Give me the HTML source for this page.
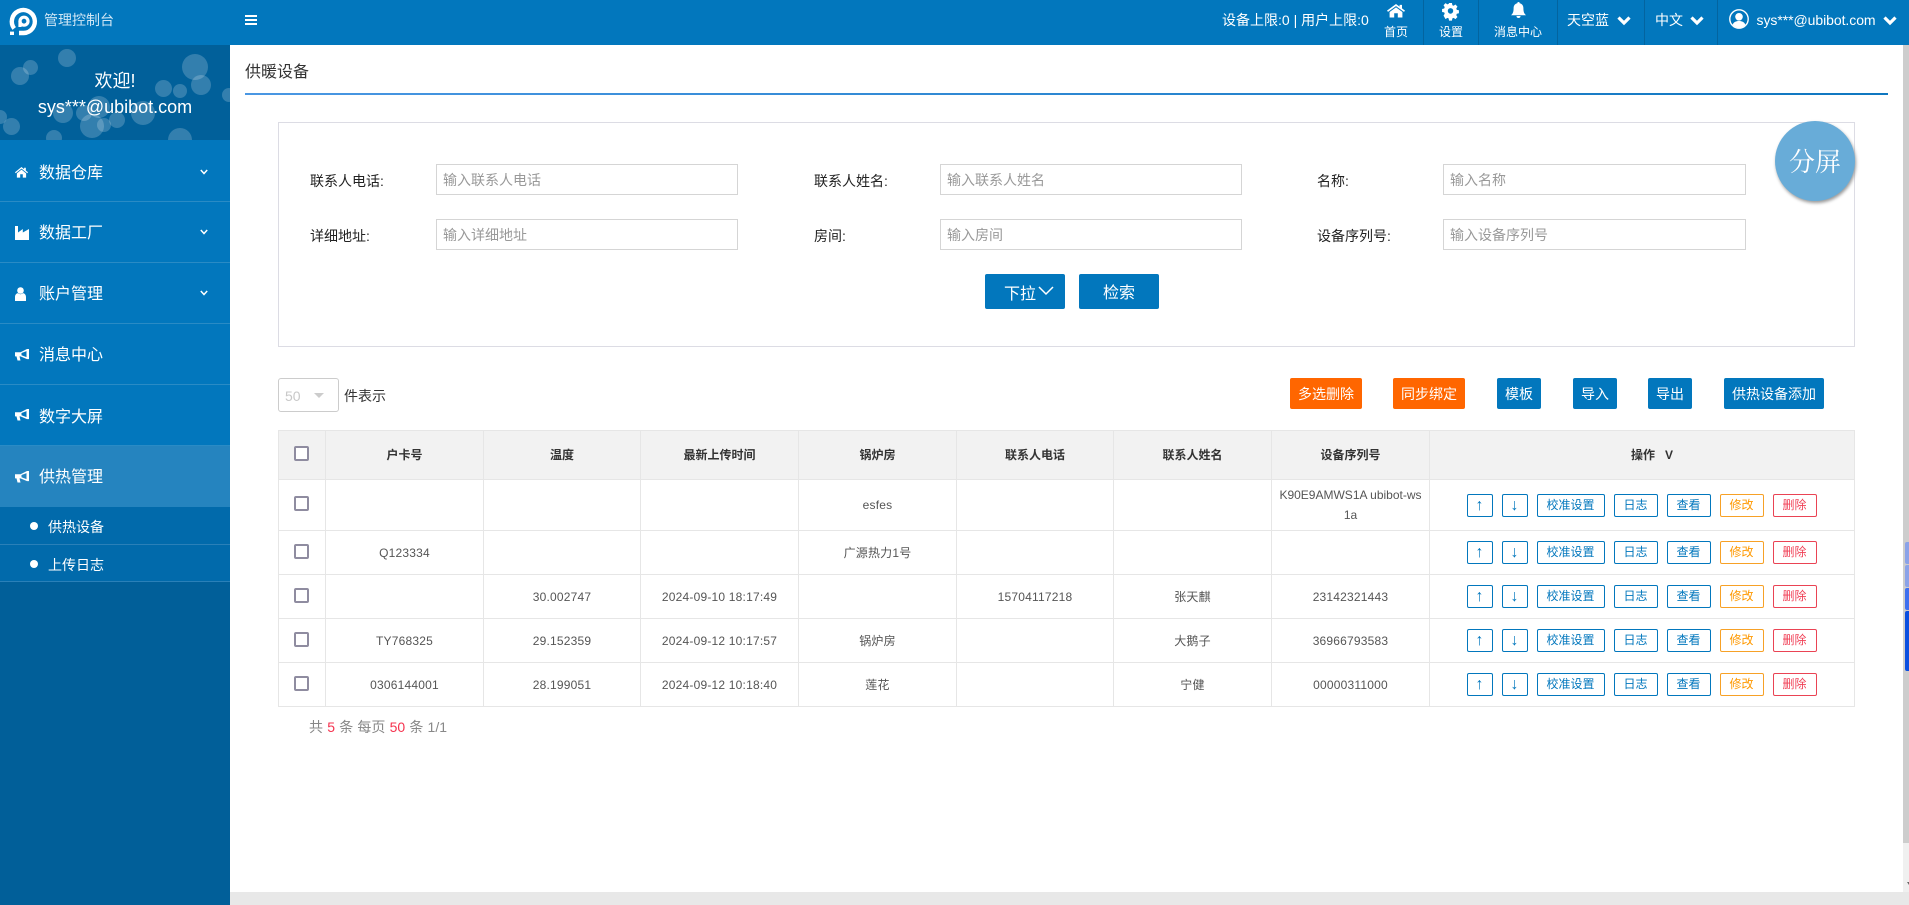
<!DOCTYPE html>
<html lang="zh">
<head>
<meta charset="utf-8">
<title>供暖设备</title>
<style>
*{box-sizing:border-box}
html,body{margin:0;padding:0;width:1909px;height:905px;overflow:hidden;background:#fff;font-family:"Liberation Sans","Noto Sans CJK SC",sans-serif;font-size:14px;color:#333}
.a,.t{position:absolute}
.t{white-space:nowrap;line-height:20px}
svg{position:absolute;display:block;overflow:visible}
#top{position:absolute;left:0;top:0;width:1909px;height:45px;background:#0277bd;color:#fff}
.div{position:absolute;top:0;width:1px;height:45px;background:#03649f}
#side{position:absolute;left:0;top:45px;width:230px;height:860px;background:#015f99;color:#fff}
#wel{position:absolute;left:0;top:0;width:230px;height:95px;background:#01609a;overflow:hidden}
#wel i{position:absolute;border-radius:50%;background:rgba(255,255,255,.2)}
.m{position:absolute;left:0;width:230px;height:61px;background:#0277bd;border-bottom:1px solid #2a8bc5;color:#fff}
.m .l{position:absolute;left:39px;font-size:16px;line-height:20px;color:#fff}
.sub{position:absolute;left:0;width:230px;background:#016aab;border-bottom:1px solid #2a80b8;color:#fff}
.sub b{position:absolute;left:30px;width:8px;height:8px;border-radius:50%;background:#fff}
.sub span{position:absolute;left:48px;font-size:14px;line-height:20px;font-weight:400}
.inp{position:absolute;height:31px;border:1px solid #d5d5d5;padding-left:6px;line-height:31px;font-size:14px;color:#999;background:#fff;overflow:hidden}
.lab{color:#222}
.btn{position:absolute;background:#0277bd;color:#fff;border-radius:2px;text-align:center}
.b1{top:378px;height:31px;line-height:32px;font-size:14px}
.or{background:#ff6600}
table{position:absolute;left:278px;top:430px;width:1576px;border-collapse:collapse;table-layout:fixed;font-size:12px;color:#555}
td,th{border:1px solid #e6e6e6;padding:0;text-align:center;line-height:20px;font-weight:400}
td{height:44px;letter-spacing:.2px}
th{background:#f2f2f2;color:#333;font-weight:700;height:49px}
.cb{display:block;width:15px;height:15px;border:2px solid #8f8ca0;border-radius:2px;margin:-3px 0 0 15px;background:#fff}
.ops{display:flex;justify-content:center;gap:9px;padding-right:1px;letter-spacing:0}
.ops span{display:block;height:23px;line-height:20px;border:1px solid #0277bd;border-radius:2px;color:#0277bd;font-size:12px;text-align:center}
.ops .y{border-color:#f7a126;color:#ff9900}
.ops .r{border-color:#ea4354;color:#f03f55}
.ops .s{width:26px;font-size:16px;line-height:22px}
.ops .w{width:68px}
.ops .n{width:44px}
</style>
</head>
<body>

<div id="top">
  <svg style="left:10px;top:8px" width="28" height="27" viewBox="0 0 28 27">
    <path d="M4.2 20.5 A11.5 11.5 0 1 1 13.8 25 H9" fill="none" stroke="#fff" stroke-width="4.4"/>
    <rect x="0" y="23.6" width="4" height="3.4" fill="#fff"/>
    <circle cx="14" cy="13.2" r="4" fill="none" stroke="#fff" stroke-width="3.2"/>
    <rect x="8.4" y="13" width="3.2" height="6" fill="#fff"/>
  </svg>
  <div class="t" style="left:44px;top:10px;color:#cfe6f5">管理控制台</div>
  <div class="a" style="left:245px;top:15px;width:12px;height:2px;background:#fff"></div>
  <div class="a" style="left:245px;top:19px;width:12px;height:2px;background:#fff"></div>
  <div class="a" style="left:245px;top:23px;width:12px;height:2px;background:#fff"></div>

  <div class="t" style="left:1222px;top:10px">设备上限:0 | 用户上限:0</div>

  <svg style="left:1387px;top:4px" width="18" height="14" viewBox="0 0 18 16" preserveAspectRatio="none">
    <path fill="#fff" d="M9 0 L0 7.6 1 9 9 2.4 17 9 18 7.6 15 5 V1 H12.6 V3 Z"/>
    <path fill="#fff" d="M9 3.8 L2.6 9.2 V15.4 H7.2 V10.6 H10.8 V15.4 H15.4 V9.2 Z"/>
  </svg>
  <div class="t" style="left:1384px;top:22px;font-size:12px">首页</div>
  <div class="div" style="left:1423px"></div>

  <svg style="left:1442px;top:3px" width="17" height="16" viewBox="-1 0 20 18" preserveAspectRatio="none">
    <path fill="#fff" fill-rule="evenodd" d="M7.3 0h3.4l.5 2.5 1.5.6 2.1-1.4 2.4 2.4-1.4 2.1.6 1.5 2.5.5v3.4l-2.5.5-.6 1.5 1.4 2.1-2.4 2.4-2.1-1.4-1.5.6-.5 2.5H7.3l-.5-2.5-1.5-.6-2.1 1.4L.8 14.2l1.4-2.1-.6-1.5L-.9 10.100V6.700l2.500-.5.6-1.500L.8 2.600 3.200.2l2.100 1.400 1.500-.6zM9 5.700a3.200 3.200 0 1 0 0 6.400 3.200 3.200 0 0 0 0-6.400z"/>
  </svg>
  <div class="t" style="left:1439px;top:22px;font-size:12px">设置</div>
  <div class="div" style="left:1478px"></div>

  <svg style="left:1511px;top:2px" width="15" height="16" viewBox="0 0 15 16">
    <path fill="#fff" d="M7.500 0a1.200 1.200 0 0 1 1.200 1.300C11 1.800 12.400 3.600 12.400 6.200c0 4 1 5.600 2.600 7H0c1.600-1.400 2.600-3 2.600-7 0-2.600 1.400-4.400 3.700-4.900A1.200 1.200 0 0 1 7.500 0z"/>
    <path fill="#fff" d="M5.500 14h4a2 2 0 0 1-4 0z"/>
  </svg>
  <div class="t" style="left:1494px;top:22px;font-size:12px">消息中心</div>
  <div class="div" style="left:1557px"></div>

  <div class="t" style="left:1567px;top:10px">天空蓝</div>
  <svg style="left:1617px;top:15px" width="14" height="11" viewBox="0 0 14 11"><path d="M1.500 2.500 7 8 12.500 2.500" fill="none" stroke="#fff" stroke-width="3.200"/></svg>
  <div class="div" style="left:1644px"></div>

  <div class="t" style="left:1655px;top:10px">中文</div>
  <svg style="left:1690px;top:15px" width="14" height="11" viewBox="0 0 14 11"><path d="M1.500 2.500 7 8 12.500 2.500" fill="none" stroke="#fff" stroke-width="3.200"/></svg>
  <div class="div" style="left:1717px"></div>

  <svg style="left:1729px;top:9px" width="20" height="20" viewBox="0 0 20 20">
    <circle cx="10" cy="10" r="9.200" fill="none" stroke="#fff" stroke-width="1.400"/>
    <circle cx="10" cy="7.800" r="3.800" fill="#fff"/>
    <path fill="#fff" d="M3.600 15.800C4.600 13 7 12 10 12s5.400 1 6.400 3.800A8.600 8.600 0 0 1 10 18.800a8.600 8.600 0 0 1-6.400-3z"/>
  </svg>
  <div class="t" style="left:1756.500px;top:10px;letter-spacing:-.06px">sys***@ubibot.com</div>
  <svg style="left:1883px;top:15px" width="14" height="11" viewBox="0 0 14 11"><path d="M1.500 2.500 7 8 12.500 2.500" fill="none" stroke="#fff" stroke-width="3.200"/></svg>
</div>

<div id="side">
  <div id="wel">
    <i style="left:58px;top:4px;width:18px;height:18px"></i>
    <i style="left:23px;top:15px;width:15px;height:15px"></i>
    <i style="left:11px;top:22px;width:18px;height:18px"></i>
    <i style="left:182px;top:9px;width:26px;height:26px"></i>
    <i style="left:191px;top:30px;width:20px;height:20px"></i>
    <i style="left:155px;top:35px;width:17px;height:17px"></i>
    <i style="left:173px;top:39px;width:14px;height:14px"></i>
    <i style="left:222px;top:43px;width:14px;height:14px"></i>
    <i style="left:131px;top:56px;width:24px;height:24px"></i>
    <i style="left:88px;top:51px;width:22px;height:22px"></i>
    <i style="left:53px;top:58px;width:20px;height:20px"></i>
    <i style="left:76px;top:60px;width:16px;height:16px"></i>
    <i style="left:80px;top:69px;width:24px;height:24px"></i>
    <i style="left:97px;top:73px;width:14px;height:14px"></i>
    <i style="left:109px;top:67px;width:16px;height:16px"></i>
    <i style="left:3px;top:73px;width:17px;height:17px"></i>
    <i style="left:-7px;top:65px;width:14px;height:14px"></i>
    <i style="left:46px;top:85px;width:16px;height:16px"></i>
    <i style="left:168px;top:83px;width:24px;height:24px"></i>
    <div class="t" style="left:0;width:230px;top:26px;text-align:center;font-size:18px;line-height:20px;color:#fff">欢迎!</div>
    <div class="t" style="left:0;width:230px;top:52px;text-align:center;font-size:18px;line-height:20px;color:#fff">sys***@ubibot.com</div>
  </div>
</div>

<div class="m" style="top:140px;height:62px">
  <svg style="left:15px;top:27px" width="13" height="11" viewBox="0 0 18 16" preserveAspectRatio="none">
    <path fill="#fff" d="M9 0 L0 7.600 1 9 9 2.400 17 9 18 7.600 15 5 V1 H12.600 V3 Z"/>
    <path fill="#fff" d="M9 3.800 L2.600 9.200 V15.400 H7.200 V10.600 H10.800 V15.400 H15.400 V9.200 Z"/>
  </svg>
  <div class="l" style="top:24px">数据仓库</div>
  <svg style="left:200px;top:28px" width="8" height="8" viewBox="0 0 8 8"><path d="M.8 2 4 5.500 7.200 2" fill="none" stroke="#fff" stroke-width="1.500"/></svg>
</div>
<div class="m" style="top:202px">
  <svg style="left:15px;top:24px" width="14" height="14" viewBox="0 0 14 14">
    <path fill="#fff" d="M0 0H3V6.500L7.800 3V6.500L14 3V14H0Z"/>
  </svg>
  <div class="l" style="top:22px">数据工厂</div>
  <svg style="left:200px;top:26px" width="8" height="8" viewBox="0 0 8 8"><path d="M.8 2 4 5.500 7.200 2" fill="none" stroke="#fff" stroke-width="1.500"/></svg>
</div>
<div class="m" style="top:263px">
  <svg style="left:15px;top:24px" width="11" height="14" viewBox="0 0 11 14">
    <circle cx="5.500" cy="3.500" r="3.300" fill="#fff"/>
    <path fill="#fff" d="M0 14V10C0 7.500 1.600 6.300 3 6.100 3.800 6.800 4.600 7.200 5.500 7.200S7.200 6.800 8 6.100C9.400 6.300 11 7.500 11 10V14Z"/>
  </svg>
  <div class="l" style="top:22px">账户管理</div>
  <svg style="left:200px;top:26px" width="8" height="8" viewBox="0 0 8 8"><path d="M.8 2 4 5.500 7.200 2" fill="none" stroke="#fff" stroke-width="1.500"/></svg>
</div>
<div class="m" style="top:324px">
  <svg style="left:15px;top:25px" width="14" height="12" viewBox="0 0 14 13" preserveAspectRatio="none">
    <path fill="#fff" fill-rule="evenodd" d="M12 0H14V11H12L5.500 8H4.500L5.500 12.500H2.500L1.500 8H0V3.500H5.500ZM6.500 4.300V6.800L11.500 8.800V2.300Z"/>
  </svg>
  <div class="l" style="top:22px">消息中心</div>
</div>
<div class="m" style="top:385px">
  <svg style="left:15px;top:24px" width="14" height="12" viewBox="0 0 14 13" preserveAspectRatio="none">
    <path fill="#fff" fill-rule="evenodd" d="M12 0H14V11H12L5.500 8H4.500L5.500 12.500H2.500L1.500 8H0V3.500H5.500ZM6.500 4.300V6.800L11.500 8.800V2.300Z"/>
  </svg>
  <div class="l" style="top:23px">数字大屏</div>
</div>
<div class="m" style="top:446px;height:61px;background:#2584bf;border-bottom:none">
  <svg style="left:15px;top:25px" width="14" height="12" viewBox="0 0 14 13" preserveAspectRatio="none">
    <path fill="#fff" fill-rule="evenodd" d="M12 0H14V11H12L5.500 8H4.500L5.500 12.500H2.500L1.500 8H0V3.500H5.500ZM6.500 4.300V6.800L11.500 8.800V2.300Z"/>
  </svg>
  <div class="l" style="top:22px">供热管理</div>
</div>
<div class="sub" style="top:507px;height:38px"><b style="top:15px"></b><span style="top:10px">供热设备</span></div>
<div class="sub" style="top:545px;height:37px"><b style="top:15px"></b><span style="top:10px">上传日志</span></div>

<div class="t" style="left:245px;top:63px;font-size:16px;color:#333">供暖设备</div>
<div class="a" style="left:245px;top:93px;width:1643px;height:2px;background:linear-gradient(90deg,#4a97e3,#0f77c0)"></div>

<div class="a" style="left:278px;top:122px;width:1577px;height:225px;border:1px solid #dcdce4"></div>

<div class="t lab" style="left:310px;top:171px">联系人电话:</div>
<div class="inp" style="left:436px;top:164px;width:302px">输入联系人电话</div>
<div class="t lab" style="left:814px;top:171px">联系人姓名:</div>
<div class="inp" style="left:940px;top:164px;width:302px">输入联系人姓名</div>
<div class="t lab" style="left:1317px;top:171px">名称:</div>
<div class="inp" style="left:1443px;top:164px;width:303px">输入名称</div>

<div class="t lab" style="left:310px;top:226px">详细地址:</div>
<div class="inp" style="left:436px;top:219px;width:302px">输入详细地址</div>
<div class="t lab" style="left:814px;top:226px">房间:</div>
<div class="inp" style="left:940px;top:219px;width:302px">输入房间</div>
<div class="t lab" style="left:1317px;top:226px">设备序列号:</div>
<div class="inp" style="left:1443px;top:219px;width:303px">输入设备序列号</div>

<div class="btn" style="left:985px;top:274px;width:80px;height:35px">
  <div class="t" style="left:19px;top:11px;font-size:16px">下拉</div>
  <svg style="left:53px;top:12px" width="16" height="9" viewBox="0 0 16 9"><path d="M1 1 8 8 15 1" fill="none" stroke="#fff" stroke-width="1.500"/></svg>
</div>
<div class="btn" style="left:1079px;top:274px;width:80px;height:35px;line-height:39px;font-size:16px">检索</div>

<div class="a" style="left:1775px;top:121px;width:80px;height:80px;border-radius:50%;background:#68acd8;box-shadow:1px 2px 3px #999;color:#fff;text-align:center;line-height:83px;font-size:26px;font-family:'Liberation Serif','Noto Serif CJK SC',serif">分屏</div>

<div class="a" style="left:278px;top:378px;width:61px;height:34px;border:1px solid #ccc;border-radius:3px;background:#fff"></div>
<div class="t" style="left:285px;top:386px;color:#c8c8c8">50</div>
<div class="a" style="left:314px;top:393px;width:0;height:0;border-left:5px solid transparent;border-right:5px solid transparent;border-top:5px solid #ccc"></div>
<div class="t" style="left:344px;top:386px;color:#333">件表示</div>

<div class="btn b1 or" style="left:1290px;width:72px">多选删除</div>
<div class="btn b1 or" style="left:1393px;width:72px">同步绑定</div>
<div class="btn b1" style="left:1497px;width:44px">模板</div>
<div class="btn b1" style="left:1573px;width:44px">导入</div>
<div class="btn b1" style="left:1648px;width:44px">导出</div>
<div class="btn b1" style="left:1724px;width:100px">供热设备添加</div>

<table>
  <colgroup><col style="width:47px"><col style="width:158px"><col style="width:157px"><col style="width:158px"><col style="width:158px"><col style="width:157px"><col style="width:158px"><col style="width:158px"><col style="width:425px"></colgroup>
  <tr><th><span class="cb"></span></th><th>户卡号</th><th>温度</th><th>最新上传时间</th><th>锅炉房</th><th>联系人电话</th><th>联系人姓名</th><th>设备序列号</th><th style="padding-left:20px">操作 &nbsp; V</th></tr>
  <tr><td style="height:51px"><span class="cb"></span></td><td></td><td></td><td></td><td>esfes</td><td></td><td></td><td style="letter-spacing:0">K90E9AMWS1A ubibot-ws<br>1a</td><td><div class="ops"><span class="s">↑</span><span class="s">↓</span><span class="w">校准设置</span><span class="n">日志</span><span class="n">查看</span><span class="n y">修改</span><span class="n r">删除</span></div></td></tr>
  <tr><td><span class="cb"></span></td><td>Q123334</td><td></td><td></td><td>广源热力1号</td><td></td><td></td><td></td><td><div class="ops"><span class="s">↑</span><span class="s">↓</span><span class="w">校准设置</span><span class="n">日志</span><span class="n">查看</span><span class="n y">修改</span><span class="n r">删除</span></div></td></tr>
  <tr><td><span class="cb"></span></td><td></td><td>30.002747</td><td>2024-09-10 18:17:49</td><td></td><td>15704117218</td><td>张天麒</td><td>23142321443</td><td><div class="ops"><span class="s">↑</span><span class="s">↓</span><span class="w">校准设置</span><span class="n">日志</span><span class="n">查看</span><span class="n y">修改</span><span class="n r">删除</span></div></td></tr>
  <tr><td><span class="cb"></span></td><td>TY768325</td><td>29.152359</td><td>2024-09-12 10:17:57</td><td>锅炉房</td><td></td><td>大鹅子</td><td>36966793583</td><td><div class="ops"><span class="s">↑</span><span class="s">↓</span><span class="w">校准设置</span><span class="n">日志</span><span class="n">查看</span><span class="n y">修改</span><span class="n r">删除</span></div></td></tr>
  <tr><td><span class="cb"></span></td><td>0306144001</td><td>28.199051</td><td>2024-09-12 10:18:40</td><td>莲花</td><td></td><td>宁健</td><td>00000311000</td><td><div class="ops"><span class="s">↑</span><span class="s">↓</span><span class="w">校准设置</span><span class="n">日志</span><span class="n">查看</span><span class="n y">修改</span><span class="n r">删除</span></div></td></tr>
</table>

<div class="t" style="left:309px;top:717px;color:#888;word-spacing:.3px">共 <span style="color:#f5334f">5</span> 条 每页 <span style="color:#f5334f">50</span> 条 1/1</div>

<div class="a" style="left:1903px;top:45px;width:6px;height:798px;background:#cdcdcd"></div>
<div class="a" style="left:1903px;top:843px;width:6px;height:49px;background:#f0f0f0"></div>
<div class="a" style="left:1907px;top:882px;width:0;height:0;border-left:2px solid transparent;border-right:2px solid transparent;border-top:3px solid #666"></div>
<div class="a" style="left:1905px;top:542px;width:4px;height:22px;background:#8aa2e8;border-radius:2px 0 0 2px"></div>
<div class="a" style="left:1905px;top:565px;width:4px;height:22px;background:#8aa2e8;border-radius:2px 0 0 2px"></div>
<div class="a" style="left:1905px;top:588px;width:4px;height:22px;background:#3d6fef;border-radius:2px 0 0 2px"></div>
<div class="a" style="left:1905px;top:611px;width:4px;height:60px;background:#0a4fe0;border-radius:2px 0 0 2px"></div>
<div class="a" style="left:230px;top:892px;width:1679px;height:13px;background:#e8e8e8"></div>

</body>
</html>
